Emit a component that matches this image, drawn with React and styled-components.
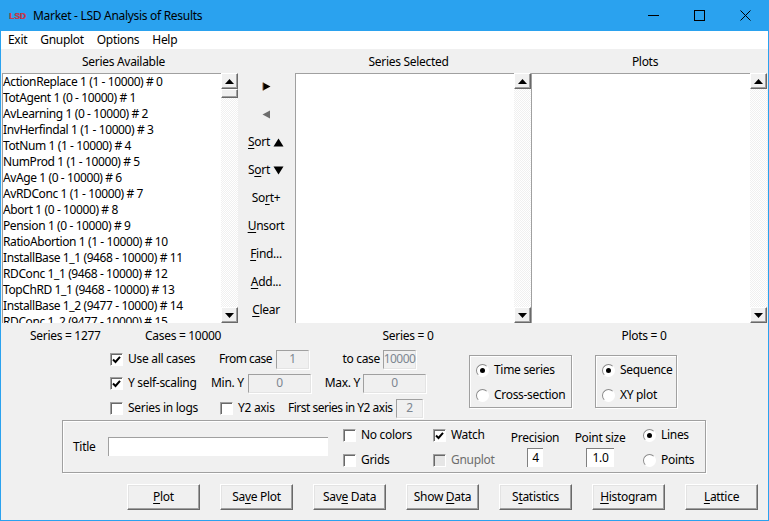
import React from "react";
import styled, { createGlobalStyle, css } from "styled-components";

const Global = createGlobalStyle`
  html, body { margin: 0; padding: 0; background: #f0f0f0; }
  body { font-family: "Noto Sans", "Open Sans", sans-serif; font-size: 12px; color: #000; }
  * { box-sizing: border-box; }
  u { text-underline-offset: 2px; text-decoration-thickness: 1px; }
`;

const Win = styled.div`
  width: 769px; height: 521px; overflow: hidden; display: flex; flex-direction: column;
  background: #f0f0f0; border: 1px solid #2aa2ef; border-top: 0;
  line-height: 16px; letter-spacing: -0.3px;
`;
const TitleBar = styled.div`
  height: 31px; flex: none; background: #2aa2ef; display: flex; align-items: center; padding-left: 8px;
`;
const AppLogo = styled.span`
  width: 24px; font: bold 8.5px/10px "Liberation Sans", sans-serif; letter-spacing: 0; color: #c8384c;
  text-shadow: 0.5px 0 0 #8a4a60;
`;
const TitleText = styled.span`flex: 1;`;
const WinBtn = styled.span`
  width: 46px; height: 31px; display: flex; align-items: center; justify-content: center;
`;
const MenuBar = styled.div`
  height: 18px; flex: none; background: #fff; display: flex; padding-left: 7px; gap: 13px; align-items: center;
`;
const MenuItem = styled.span`font-size: 12px;`;

const Lists = styled.div`
  display: grid; grid-template-columns: 236px 57px 236px 236px; height: 274px; flex: none; padding-left: 1px;
`;
const ListCol = styled.div`display: flex; flex-direction: column;`;
const ColHead = styled.div`
  height: 24px; flex: none; text-align: center; line-height: 23px;
  padding: 1px ${p => p.$pr || 0}px 0 ${p => p.$pl || 0}px;
`;
const ListRow = styled.div`display: flex; height: 250px;`;
const ListBox = styled.div`
  flex: 1; background: #fff; border-top: 1px solid #a0a0a0; border-left: 1px solid #a0a0a0;
  overflow: hidden;
`;
const ListItem = styled.div`height: 16px; line-height: 16px; white-space: nowrap; letter-spacing: -0.4px;`;
const ScrollBar = styled.div`
  width: 17px; flex: none; display: flex; flex-direction: column;
  background-color: #fff;
  background-image: conic-gradient(#f0f0f0 25%, #fff 0 50%, #f0f0f0 0 75%, #fff 0);
  background-size: 2px 2px;
`;
const raised = css`
  background: #f0f0f0; border: 1px solid; border-color: #fff #696969 #696969 #fff;
  box-shadow: inset -1px -1px 0 #a0a0a0;
`;
const ScrollBtn = styled.div`
  ${raised}; height: 16px; flex: none; display: flex; align-items: center; justify-content: center;
`;
const Thumb = styled.div`${raised}; height: 9px; flex: none;`;
const Spacer = styled.div`flex: 1;`;
const Mid = styled.div`display: flex; flex-direction: column; align-items: center; padding: 23px 1px 0 0;`;
const MidItem = styled.div`
  height: 28px; flex: none; display: flex; align-items: center; justify-content: center; gap: 3px;
`;

const Status = styled.div`
  height: 24px; flex: none; display: grid;
  grid-template-columns: 115px 125px 276px 196px; padding: 1px 0 0 29px; align-items: center;
`;
const StatusItem = styled.span`
  white-space: nowrap; text-align: ${p => p.$center ? "center" : "left"};
`;

const Options = styled.div`display: flex; height: 73px; flex: none; padding-left: 109px;`;
const Rows = styled.div`width: 359px; flex: none; display: flex; flex-direction: column;`;
const Row = styled.div`
  display: flex; align-items: center; height: ${p => p.$h || 24}px; padding-top: ${p => p.$pt || 0}px; white-space: nowrap;
`;
const Check = styled.span`
  width: 13px; height: 13px; flex: none; display: inline-flex; align-items: center; justify-content: center;
  background: ${p => p.$disabled ? "#e6e6e6" : "#fff"};
  border: 1px solid; border-color: #a0a0a0 #fff #fff #a0a0a0;
  box-shadow: inset 1px 1px 0 #696969;
  margin-right: 5px;
`;
const Label = styled.span`
  width: ${p => p.$w ? p.$w + "px" : "auto"}; flex: none; color: ${p => p.$disabled ? "#6d6d6d" : "#000"};
  text-align: ${p => p.$right ? "right" : "left"};
  letter-spacing: ${p => p.$tight ? "-0.5px" : "inherit"};
`;
const Field = styled.span`
  height: 19px; width: ${p => p.$w}px; flex: none; display: inline-flex; align-items: center; justify-content: center;
  border: 1px solid; border-color: #a0a0a0 #e4e4e4 #e4e4e4 #a0a0a0; margin-left: 3px;
  box-shadow: 1px 1px 0 #fff; color: #7d8791;
  letter-spacing: ${p => p.$tight ? "-0.6px" : "inherit"};
`;
const Group = styled.div`
  width: ${p => p.$w}px; height: 53px; margin-left: ${p => p.$ml}px; margin-top: 8px; flex: none;
  border: 1px solid #a0a0a0; box-shadow: 1px 1px 0 #fff, inset 1px 1px 0 #fff;
  display: flex; flex-direction: column; padding: 6px 0 0 6px; gap: 9px;
`;
const RadioRow = styled.div`display: flex; align-items: center; height: 16px; white-space: nowrap;`;
const RadioDot = styled.span`
  width: 13px; height: 13px; border-radius: 50%; background: #fff; flex: none; margin-right: 5px;
  border: 1px solid; border-color: #8a8a8a #fff #fff #8a8a8a; display: flex; align-items: center; justify-content: center;
  &::after { content: ""; width: 5px; height: 5px; border-radius: 50%; background: ${p => p.$on ? "#000" : "transparent"}; }
`;
const TitleBox = styled.div`
  margin-left: 61px; width: 644px; height: 53px; flex: none;
  border: 1px solid #a0a0a0; box-shadow: 1px 1px 0 #fff, inset 1px 1px 0 #fff;
  display: flex; align-items: stretch;
`;
const TitleLabelWrap = styled.div`width: 45px; flex: none; display: flex; align-items: center; padding: 1px 0 0 10px;`;
const TitleInput = styled.div`
  width: 220px; height: 19px; align-self: center; flex: none; background: #fff;
  border-top: 1px solid #a0a0a0; border-left: 1px solid #a0a0a0;
`;
const CheckCol = styled.div`
  width: ${p => p.$w}px; margin-left: ${p => p.$ml || 0}px; flex: none; display: flex; flex-direction: column; padding-top: 6px; gap: 9px;
`;
const CheckRow = styled.div`display: flex; align-items: center; height: 16px; white-space: nowrap;`;
const NumCol = styled.div`
  width: ${p => p.$w}px; flex: none; display: flex; flex-direction: column; align-items: center; padding-top: 9px; gap: 2px;
`;
const NumField = styled.div`
  width: ${p => p.$w}px; height: 19px; background: #fff; border-top: 1px solid #808080; border-left: 1px solid #808080;
  display: flex; align-items: center; justify-content: center;
`;
const RadioCol = styled.div`flex: 1; display: flex; flex-direction: column; padding: 6px 0 0 7px; gap: 9px;`;
const Buttons = styled.div`display: flex; gap: 20px; padding: 11px 0 0 126px; flex: none;`;
const Btn = styled.div`
  width: 73px; height: 26px; display: flex; align-items: center; justify-content: center;
  background: #f0f0f0; border: 1px solid; border-color: #fff #696969 #696969 #fff;
  box-shadow: inset -1px -1px 0 #a0a0a0, inset 1px 1px 0 #e3e3e3;
`;

const Arrow = ({ d }) => (
  <svg width="9" height="5" viewBox="0 0 9 5" aria-hidden="true"><path d={d} fill="#000" /></svg>
);
const Tri = ({ dir, fill }) => (
  <svg width="9" height="9" viewBox="0 0 9 9" aria-hidden="true">
    <path d={dir === "r" ? "M1 0.5 L8.5 4.5 L1 8.5Z" : "M8 0.5 L0.5 4.5 L8 8.5Z"} fill={fill} />
    {dir === "r" && <rect x="0.5" y="0.5" width="1" height="8" fill="#a65a14" />}
  </svg>
);
const SortTri = ({ up }) => (
  <svg width="11" height="9" viewBox="0 0 11 9" aria-hidden="true">
    <path d={up ? "M5.5 0.5 L10.5 8.5 L0.5 8.5Z" : "M0.5 0.5 L10.5 0.5 L5.5 8.5Z"} fill="#000" />
  </svg>
);
const Tick = () => (
  <svg width="11" height="11" viewBox="0 0 11 11" aria-hidden="true">
    <path d="M2 5.5 L4.5 8 L9 2.8" fill="none" stroke="#000" strokeWidth="2" />
  </svg>
);

const series = [
  "ActionReplace 1 (1 - 10000) # 0", "TotAgent 1 (0 - 10000) # 1", "AvLearning 1 (0 - 10000) # 2",
  "InvHerfindal 1 (1 - 10000) # 3", "TotNum 1 (1 - 10000) # 4", "NumProd 1 (1 - 10000) # 5",
  "AvAge 1 (0 - 10000) # 6", "AvRDConc 1 (1 - 10000) # 7", "Abort 1 (0 - 10000) # 8",
  "Pension 1 (0 - 10000) # 9", "RatioAbortion 1 (1 - 10000) # 10", "InstallBase 1_1 (9468 - 10000) # 11",
  "RDConc 1_1 (9468 - 10000) # 12", "TopChRD 1_1 (9468 - 10000) # 13", "InstallBase 1_2 (9477 - 10000) # 14",
  "RDConc 1_2 (9477 - 10000) # 15",
];

const Scroll = ({ thumb }) => (
  <ScrollBar>
    <ScrollBtn><Arrow d="M4.5 0 L9 5 L0 5Z" /></ScrollBtn>
    {thumb && <Thumb />}
    <Spacer />
    <ScrollBtn><Arrow d="M0 0 L9 0 L4.5 5Z" /></ScrollBtn>
  </ScrollBar>
);

const Radio = ({ on, children }) => (
  <RadioRow><RadioDot $on={on} />{children}</RadioRow>
);

export default function App() {
  return (
    <Win>
      <Global />
      <TitleBar>
        <AppLogo>LSD</AppLogo>
        <TitleText>Market - LSD Analysis of Results</TitleText>
        <WinBtn>
          <svg width="11" height="11" viewBox="0 0 11 11"><path d="M0 5.5H11" stroke="#000" /></svg>
        </WinBtn>
        <WinBtn>
          <svg width="11" height="11" viewBox="0 0 11 11"><rect x="0.5" y="0.5" width="10" height="10" fill="none" stroke="#000" /></svg>
        </WinBtn>
        <WinBtn>
          <svg width="11" height="11" viewBox="0 0 11 11"><path d="M0.5 0.5L10.5 10.5M10.5 0.5L0.5 10.5" stroke="#000" /></svg>
        </WinBtn>
      </TitleBar>
      <MenuBar>
        <MenuItem>Exit</MenuItem><MenuItem>Gnuplot</MenuItem><MenuItem>Options</MenuItem><MenuItem>Help</MenuItem>
      </MenuBar>
      <Lists>
        <ListCol>
          <ColHead $pl={7}>Series Available</ColHead>
          <ListRow>
            <ListBox>{series.map(s => <ListItem key={s}>{s}</ListItem>)}</ListBox>
            <Scroll thumb />
          </ListRow>
        </ListCol>
        <Mid>
          <MidItem><Tri dir="r" fill="#000" /></MidItem>
          <MidItem><Tri dir="l" fill="#6d6d6d" /></MidItem>
          <MidItem><span><u>S</u>ort</span><SortTri up /></MidItem>
          <MidItem><span>S<u>o</u>rt</span><SortTri /></MidItem>
          <MidItem><span>So<u>r</u>t+</span></MidItem>
          <MidItem><span><u>U</u>nsort</span></MidItem>
          <MidItem><span><u>F</u>ind...</span></MidItem>
          <MidItem><span><u>A</u>dd...</span></MidItem>
          <MidItem><span><u>C</u>lear</span></MidItem>
        </Mid>
        <ListCol>
          <ColHead $pr={9}>Series Selected</ColHead>
          <ListRow><ListBox /><Scroll /></ListRow>
        </ListCol>
        <ListCol>
          <ColHead $pr={8}>Plots</ColHead>
          <ListRow><ListBox /><Scroll /></ListRow>
        </ListCol>
      </Lists>
      <Status>
        <StatusItem>Series = 1277</StatusItem>
        <StatusItem>Cases = 10000</StatusItem>
        <StatusItem $center>Series = 0</StatusItem>
        <StatusItem $center>Plots = 0</StatusItem>
      </Status>
      <Options>
        <Rows>
          <Row>
            <Check><Tick /></Check><Label $w={91}>Use all cases</Label>
            <Label $w={54} $tight>From case</Label><Field $w={33}>1</Field>
            <Label $w={71} $right>to case</Label><Field $w={33} $tight>10000</Field>
          </Row>
          <Row>
            <Check><Tick /></Check><Label $w={83}>Y self-scaling</Label>
            <Label $w={34}>Min. Y</Label><Field $w={63}>0</Field>
            <Label $w={49} $right>Max. Y</Label><Field $w={63}>0</Field>
          </Row>
          <Row $h={25} $pt={1}>
            <Check /><Label $w={92}>Series in logs</Label>
            <Check /><Label $w={50}>Y2 axis</Label>
            <Label $w={105} $tight>First series in Y2 axis</Label><Field $w={27}>2</Field>
          </Row>
        </Rows>
        <Group $w={103} $ml={0}>
          <Radio on>Time series</Radio>
          <Radio>Cross-section</Radio>
        </Group>
        <Group $w={82} $ml={23}>
          <Radio on>Sequence</Radio>
          <Radio>XY plot</Radio>
        </Group>
      </Options>
      <TitleBox>
        <TitleLabelWrap>Title</TitleLabelWrap>
        <TitleInput />
        <CheckCol $w={90} $ml={15}>
          <CheckRow><Check />No colors</CheckRow>
          <CheckRow><Check />Grids</CheckRow>
        </CheckCol>
        <CheckCol $w={73}>
          <CheckRow><Check><Tick /></Check>Watch</CheckRow>
          <CheckRow><Check $disabled /><Label $disabled>Gnuplot</Label></CheckRow>
        </CheckCol>
        <NumCol $w={58}>
          <span>Precision</span>
          <NumField $w={16}>4</NumField>
        </NumCol>
        <NumCol $w={72}>
          <span>Point size</span>
          <NumField $w={28}>1.0</NumField>
        </NumCol>
        <RadioCol>
          <Radio on>Lines</Radio>
          <Radio>Points</Radio>
        </RadioCol>
      </TitleBox>
      <Buttons>
        <Btn><span><u>P</u>lot</span></Btn>
        <Btn><span>Sa<u>v</u>e Plot</span></Btn>
        <Btn><span>Sav<u>e</u> Data</span></Btn>
        <Btn><span>Show <u>D</u>ata</span></Btn>
        <Btn><span>S<u>t</u>atistics</span></Btn>
        <Btn><span><u>H</u>istogram</span></Btn>
        <Btn><span><u>L</u>attice</span></Btn>
      </Buttons>
    </Win>
  );
}
